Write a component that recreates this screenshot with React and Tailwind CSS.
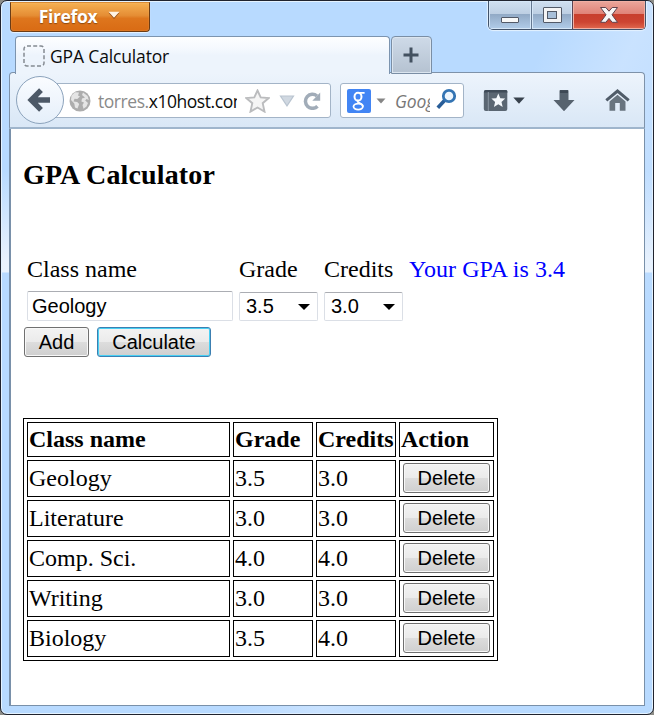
import React from "react";

const rows = [
  ["Geology", "3.5", "3.0"],
  ["Literature", "3.0", "3.0"],
  ["Comp. Sci.", "4.0", "4.0"],
  ["Writing", "3.0", "3.0"],
  ["Biology", "3.5", "4.0"],
];

const buttonFace =
  "flex h-[30px] items-center justify-center rounded-[3px] border border-[#707070] bg-[linear-gradient(#f3f3f3_0%,#ebebeb_49%,#dddddd_50%,#cfcfcf_100%)] font-['Liberation_Sans',sans-serif] text-[20px] leading-none text-black shadow-[inset_0_0_0_1px_#f8f8f8]";

function TitleBar() {
  return (
    <div className="flex h-[35px] shrink-0 items-start pl-[9px] pr-[7px]">
      <button className="mt-px flex h-[30px] w-[140px] items-center justify-center rounded-b-[4px] border border-[#6b3c16] border-t-[#d98b35] bg-[linear-gradient(#f5b052_0%,#e58d34_45%,#de761d_55%,#d96b14_100%)] pb-[2px] pr-px font-['Open_Sans',sans-serif] text-[17.5px] font-bold leading-none tracking-[-0.38px] text-white shadow-[inset_0_0_1px_#ffd294,0_1px_1px_#eaf4ff] [text-shadow:0_1px_1px_#8c4a12]">
        <span className="mt-[2px]">Firefox</span>
        <svg className="ml-[11px] -mt-[2px]" width="12" height="8" viewBox="0 0 12 8">
          <path d="M0.5 1.8H11.5L6 8Z" fill="#944b12" />
          <path d="M0.5 0.7H11.5L6 6.7Z" fill="#fff3e4" />
        </svg>
      </button>
      <div className="ml-auto flex h-[29px] w-[158px] overflow-hidden rounded-b-[5px] border border-t-0 border-[#42536b] shadow-[0_0_1px_1px_#e5f2ff]">
        <div className="flex w-[43px] items-end justify-center border-r border-[#657890] bg-[linear-gradient(#d0dff0_0%,#bdcfe3_46%,#92aac6_48%,#b1cce9_100%)] pb-[6px] shadow-[inset_0_0_0_1px_#d5e6f7]">
          <div className="h-[6px] w-[18px] rounded-[1px] border border-[#525967] bg-[#f8f8f8]" />
        </div>
        <div className="flex w-[41px] items-center justify-center border-r border-[#5c4352] bg-[linear-gradient(#d0dff0_0%,#bdcfe3_46%,#92aac6_48%,#b1cce9_100%)] shadow-[inset_0_0_0_1px_#d5e6f7]">
          <div className="flex h-[16px] w-[19px] items-center justify-center rounded-[1px] border border-[#525967] bg-[#f4f4f5]">
            <div className="h-[8px] w-[10px] border border-[#525967] bg-[#a7bfd9]" />
          </div>
        </div>
        <div className="flex flex-1 items-center justify-center bg-[linear-gradient(#eba79c_0%,#e08478_45%,#c83f2d_48%,#cc4431_75%,#e0694f_100%)] shadow-[inset_0_0_0_1px_#f0b0a4]">
          <svg width="20" height="18" viewBox="0 0 20 18">
            <path d="M1.5 1.5H6.8L10 5.2L13.2 1.5H18.5L13 8.8L18.5 16.3H13.2L10 12.4L6.8 16.3H1.5L7 8.8Z" fill="#f7f7f7" stroke="#60424b" strokeWidth="1" strokeLinejoin="round" />
          </svg>
        </div>
      </div>
    </div>
  );
}

function Tabs() {
  return (
    <div className="relative z-10 flex h-[36px] shrink-0 items-start pl-[14px]">
      <div className="flex h-[38px] w-[375px] items-center rounded-t-[4px] border border-b-0 border-[#7c94af] bg-[linear-gradient(#fdfeff_0%,#f5f9fe_30%,#edf4fc_50%,#edf4fc_100%)] pl-[7px]">
        <svg width="22" height="22" viewBox="0 0 22 22">
          <rect x="1" y="1" width="20" height="20" rx="3" fill="none" stroke="#848a91" strokeWidth="1.5" strokeDasharray="4 2.2" />
        </svg>
        <span className="ml-[5px] mt-[3px] whitespace-nowrap font-['Open_Sans',sans-serif] text-[17.5px] leading-none tracking-[-0.15px] text-[#0b0b0b]">GPA Calculator</span>
      </div>
      <div className="ml-[1px] flex h-[38px] w-[41px] items-center justify-center rounded-t-[4px] border border-[#7a8ea5] bg-[linear-gradient(#cedae8,#b5c2d1)] pr-px shadow-[inset_0_0_0_1px_#dbe5ef]">
        <svg width="16" height="16" viewBox="0 0 16 16">
          <path d="M8 0.5V15.5M0.5 8H15.5" stroke="#435160" strokeWidth="3" />
        </svg>
      </div>
    </div>
  );
}

function Toolbar() {
  return (
    <div className="flex h-[57px] shrink-0 items-start rounded-t-[4px] border border-b-2 border-[#7e92a9] border-b-[#9fb5cc] bg-[linear-gradient(#edf4fc,#d9e7f6)] pl-[6px] pt-[3px]">
      <div className="relative z-10 flex size-[48px] shrink-0 items-center justify-center rounded-full border border-[#8ca3bc] bg-[linear-gradient(#fafcff,#e5effa)]">
        <svg className="-ml-[2px]" width="24" height="26" viewBox="0 0 24 26">
          <path d="M14 3.2L4.2 13L14 22.8M5 13H23" fill="none" stroke="#4d5967" strokeWidth="5.4" />
        </svg>
      </div>
      <div className="-ml-[12px] mt-[7px] flex h-[35px] w-[279px] shrink-0 items-center rounded-[3px] border border-[#a3b4c7] bg-white pl-[16px]">
        <svg className="shrink-0" width="22" height="22" viewBox="0 0 22 22">
          <circle cx="11" cy="11" r="10.5" fill="#adadad" />
          <path d="M2.5 5.5L6 2.2L10 2.6L9 5.4L11 6.4L8.3 9L5.5 8.8L4.5 11.5L8.2 12L10.2 14L8.5 18.5L6 17.5L5.3 13.5L2 10ZM14 2.5L18.6 6L19.8 10L17.5 9L16.2 10.5L19 13L17.5 16.5L14.5 18.8L13.5 15L15 12.6L12.4 11.5L13 8.5L16 7.5L13 5Z" fill="#e5e5e5" />
        </svg>
        <div className="ml-[7px] w-[139px] shrink-0 overflow-hidden whitespace-nowrap font-['Open_Sans',sans-serif] text-[17.5px] leading-[26px] tracking-[-0.45px] text-[#0b0b0b]">
          <span className="text-[#8a8a8a]">torres.</span>x10host.com
        </div>
        <svg className="ml-[8px] shrink-0" width="25" height="24" viewBox="0 0 25 24">
          <path d="M12.5 1.5L15.7 8.4L23.7 9L17.7 14.2L19.5 22.6L12.5 18.5L5.5 22.6L7.3 14.2L1.3 9L9.3 8.4Z" fill="#f5f5f5" stroke="#bbbcbe" strokeWidth="1.9" />
        </svg>
        <svg className="ml-[9px] shrink-0" width="16" height="12" viewBox="0 0 16 12">
          <path d="M1.5 1H14.5L8 10.8Z" fill="#d0d8e1" stroke="#b9c4d0" strokeWidth="1.2" />
        </svg>
        <svg className="ml-[8px] shrink-0" width="18" height="18" viewBox="0 0 18 18">
          <path d="M14.5 14.2A7 7 0 1 1 14 4" fill="none" stroke="#a1acb8" strokeWidth="3.5" />
          <path d="M17.2 0.5V8.8H9.3Z" fill="#a1acb8" />
        </svg>
      </div>
      <div className="ml-[9px] mt-[7px] flex h-[35px] w-[124px] shrink-0 items-center rounded-[3px] border border-[#a3b4c7] bg-white pl-[6px]">
        <div className="flex h-[24px] w-[24px] shrink-0 items-center justify-center rounded-[2px] bg-[#4285f4]">
          <svg width="16" height="22" viewBox="0 0 16 22" fill="none" stroke="#fff">
            <ellipse cx="7" cy="6.7" rx="3.5" ry="3.9" strokeWidth="2" />
            <ellipse cx="7.2" cy="16.6" rx="4.7" ry="3" strokeWidth="1.8" />
            <path d="M8 2.9H13.6M7.4 10.2C5.6 11.6 7.2 12.4 9 13.2C10.6 13.9 11.8 15 11.8 16.5" strokeWidth="1.8" />
          </svg>
        </div>
        <svg className="ml-[5px] shrink-0" width="10" height="6" viewBox="0 0 10 6">
          <path d="M0.5 0.5H9.5L5 5.5Z" fill="#858585" />
        </svg>
        <div className="ml-[9px] w-[35px] shrink-0 overflow-hidden whitespace-nowrap font-['Open_Sans',sans-serif] text-[17.5px] italic leading-[26px] tracking-[-0.1px] text-[#777]">Google</div>
        <svg className="-mt-[3px] ml-[6px] shrink-0" width="21" height="22" viewBox="0 0 21 22">
          <path d="M9 12L1.8 19.8" stroke="#285d98" strokeWidth="3.6" />
          <circle cx="13" cy="8" r="5.7" fill="#eef6fd" stroke="#3474b3" strokeWidth="2.8" />
        </svg>
      </div>
      <svg className="ml-[19px] mt-[13px] shrink-0" width="25" height="23" viewBox="0 0 25 23">
        <rect x="0.8" y="1" width="23.5" height="21" rx="2" fill="#5a6672" />
        <path d="M1 2.7Q1 1 3 1H23Q24.5 1 24.5 3V3.6H1Z" fill="#3f4b58" />
        <path d="M5.3 3V22" stroke="#8a96a2" />
        <path d="M15.3 4.5L17.3 9.2L22.2 9.6L18.5 12.9L19.7 18L15.3 15.2L10.9 18L12.1 12.9L8.4 9.6L13.3 9.2Z" fill="#f4f8fc" />
      </svg>
      <svg className="ml-[5px] mt-[21px] shrink-0" width="12" height="7" viewBox="0 0 12 7">
        <path d="M0.3 0.5H11.7L6 6.7Z" fill="#38424d" />
      </svg>
      <svg className="ml-[28px] mt-[13px] shrink-0" width="22" height="23" viewBox="0 0 22 23">
        <path d="M6.5 1.8Q6.5 1 7.5 1H14.5Q15.5 1 15.5 1.8V11H21.5L11 22.3L0.5 11H6.5Z" fill="#57636f" />
        <path d="M7 1.3H15V4H7Z" fill="#3e4955" />
      </svg>
      <svg className="ml-[30px] mt-[13px] shrink-0" width="25" height="23" viewBox="0 0 25 23">
        <path d="M1.3 11.4L12.5 2L23.7 11.4" fill="none" stroke="#505c69" strokeWidth="3" />
        <path d="M12.5 5.7L20.5 12.4V21.8H14.8V14H10.2V21.8H4.5V12.4Z" fill="#68747f" />
      </svg>
    </div>
  );
}

function SelectBox({ value }) {
  return (
    <div className="flex h-[29px] w-[79px] items-center rounded-[2px] border border-[#dbdfe6] border-t-[#abadb3] bg-white pb-px pl-[6px] font-['Liberation_Sans',sans-serif] text-[20px] leading-none">
      <span>{value}</span>
      <svg className="ml-auto mr-[7px] mt-[2px]" width="12" height="6" viewBox="0 0 12 6">
        <path d="M0 0H12L6 6Z" fill="#000" />
      </svg>
    </div>
  );
}

function Page() {
  return (
    <div className="min-h-0 flex-1 border border-l-2 border-t-0 border-[#7990a9] bg-white pl-[12px] font-['Liberation_Serif',serif] text-[24px] leading-[27px] text-black">
      <h3 className="pt-[30px] text-[28px] font-bold leading-[32px] tracking-[0.14px]">GPA Calculator</h3>
      <div className="flex pl-[4px] pt-[65px]">
        <span className="w-[212px]">Class name</span>
        <span className="w-[85px]">Grade</span>
        <span className="w-[85px]">Credits</span>
        <span className="tracking-[0.05px] text-[#0000ff]">Your GPA is 3.4</span>
      </div>
      <div className="flex items-end gap-[6px] pl-[4px] pt-[8px]">
        <div className="flex h-[30px] w-[206px] items-center rounded-[2px] border border-[#dbdfe6] border-t-[#abadb3] pl-[4px] font-['Liberation_Sans',sans-serif] text-[20px] leading-none">Geology</div>
        <SelectBox value="3.5" />
        <SelectBox value="3.0" />
      </div>
      <div className="flex gap-[8px] pl-px pt-[6px]">
        <button className={buttonFace + " w-[65px]"}>Add</button>
        <button className="flex h-[30px] w-[114px] items-center justify-center rounded-[3px] border border-[#3c7fb1] bg-[linear-gradient(#f3f3f3_0%,#ebebeb_49%,#dddddd_50%,#cfcfcf_100%)] font-['Liberation_Sans',sans-serif] text-[20px] leading-none text-black shadow-[inset_0_0_0_1px_#48d0f4]">Calculate</button>
      </div>
      <div className="mt-[61px] flex w-[475px] flex-col gap-[3px] border border-black p-[3px]">
        <div className="grid h-[35px] grid-cols-[203px_80px_80px_95px] gap-[3px] font-bold">
          {["Class name", "Grade", "Credits", "Action"].map((label) => (
            <div key={label} className="flex items-center whitespace-nowrap border border-black pl-px">{label}</div>
          ))}
        </div>
        {rows.map((row) => (
          <div key={row[0]} className="grid h-[37px] grid-cols-[203px_80px_80px_95px] gap-[3px]">
            {row.map((cell, i) => (
              <div key={i} className="flex items-center border border-black pl-px">{cell}</div>
            ))}
            <div className="border border-black pl-[3px] pt-[2px]">
              <button className={buttonFace + " w-[87px]"}>Delete</button>
            </div>
          </div>
        ))}
      </div>
    </div>
  );
}

export default function App() {
  return (
    <div className="h-[715px] w-[654px] overflow-hidden bg-[#8d8d88]">
      <div className="flex h-[715px] w-[654px] flex-col overflow-hidden rounded-[7px] border border-[#20232e] bg-[linear-gradient(#b8daff_0px,#b8daff_170px,#e9f2fd_260px,#eaf3fd_271px,#b8daff_272px,#b8daff_100%)] shadow-[inset_0_0_0_1px_#e5f3ff]">
        <div className="flex min-h-0 flex-1 flex-col bg-[linear-gradient(115deg,transparent_0px,transparent_510px,#d5e8ff99_590px,transparent_720px)]">
          <TitleBar />
          <Tabs />
          <div className="flex min-h-0 flex-1 flex-col pb-[8px] pl-[8px] pr-[8px]">
            <Toolbar />
            <Page />
          </div>
        </div>
      </div>
    </div>
  );
}
